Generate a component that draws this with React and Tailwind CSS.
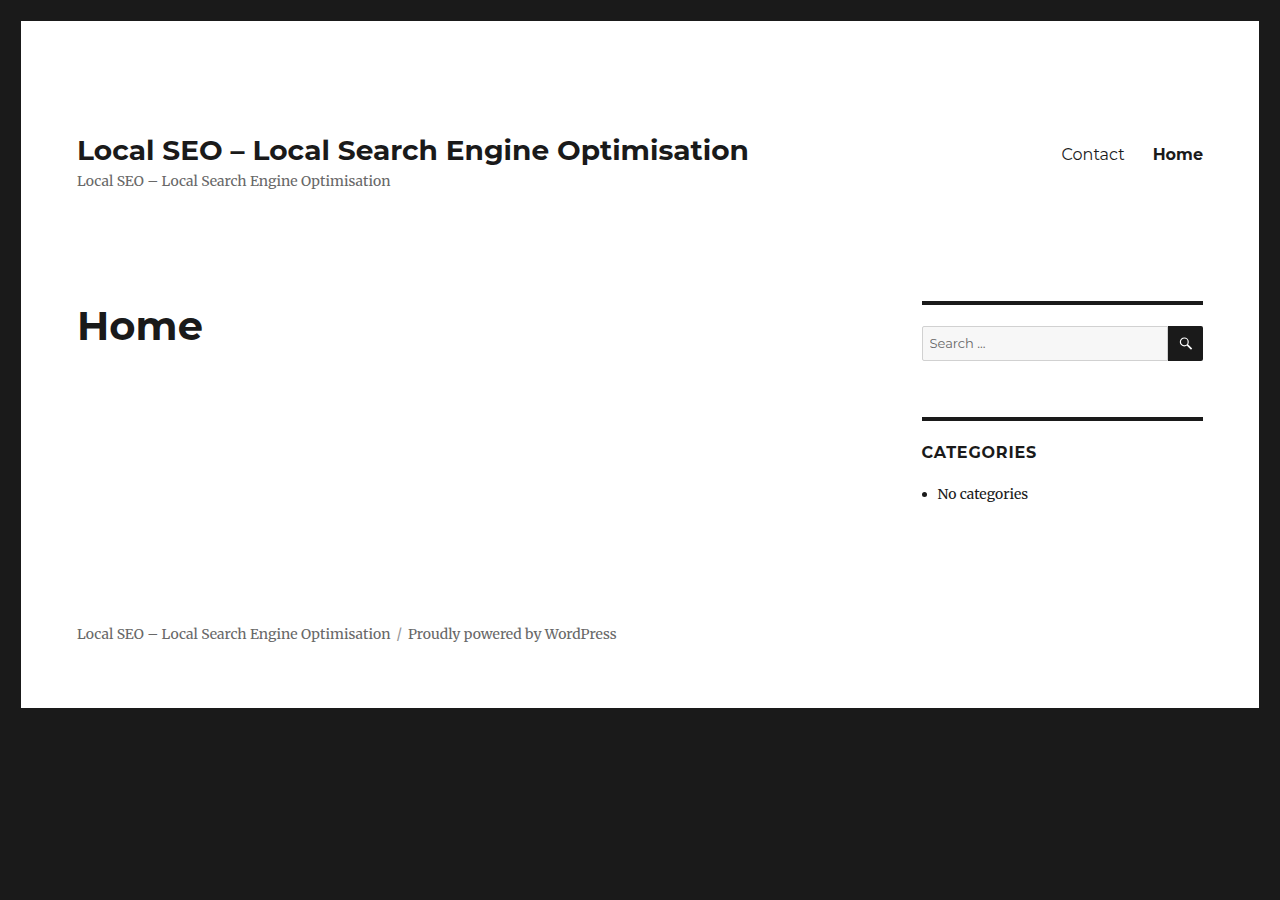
const siteName = 'Local SEO – Local Search Engine Optimisation';

function Header() {
  return (
    <header className="flex flex-wrap items-center justify-between pt-[110px] pb-28">
      <div>
        <p className="font-['Montserrat','Inter',sans-serif] text-[28px] leading-[38px] font-bold">
          <a href="#home">{siteName}</a>
        </p>
        <p className="mt-1 text-sm leading-4 text-[#686868]">{siteName}</p>
      </div>
      <nav aria-label="Primary menu" className="mb-2.5">
        <ul className="flex gap-7 font-['Montserrat','Inter',sans-serif] text-base leading-6">
          <li><a href="#contact">Contact</a></li>
          <li><a href="#home" aria-current="page" className="font-bold">Home</a></li>
        </ul>
      </nav>
    </header>
  );
}

function SearchForm() {
  return (
    <form role="search" className="flex" onSubmit={(event) => event.preventDefault()}>
      <input
        type="search"
        aria-label="Search for:"
        placeholder="Search ..."
        className="h-[35px] min-w-0 flex-1 rounded-l-xs border border-[#d1d1d1] bg-[#f7f7f7] px-[7px] pb-0.5 font-['Montserrat','Inter',sans-serif] text-[13px] placeholder:text-[#686868]"
      />
      <button type="submit" aria-label="Search" className="flex size-[35px] items-center justify-center rounded-r-xs bg-[#1a1a1a] text-white">
        <svg viewBox="0 0 14 14" className="size-[14px]" fill="none" stroke="currentColor" aria-hidden="true">
          <circle cx="5.3" cy="4.9" r="3.9" strokeWidth="1.2" />
          <path d="M8.1 7.7 L12.6 12.2" strokeWidth="1.7" />
        </svg>
      </button>
    </form>
  );
}

export default function App() {
  return (
    <div className="min-h-screen bg-[#1a1a1a] p-[21px] font-['Merriweather','DejaVu_Serif_Condensed','DejaVu_Serif',serif] text-[#1a1a1a]">
      <div className="bg-white px-14">
        <Header />
        <div className="flex items-start justify-between">
          <main>
            <h1 className="font-['Montserrat','Inter',sans-serif] text-[40px] leading-[50px] font-bold">Home</h1>
          </main>
          <aside className="w-1/4">
            <section className="mb-14 border-t-4 border-[#1a1a1a] pt-[21px]">
              <SearchForm />
            </section>
            <section className="mb-28 border-t-4 border-[#1a1a1a] pt-[21px]">
              <h2 className="mb-[22px] font-['Montserrat','Inter',sans-serif] text-base leading-[22px] font-bold tracking-wider uppercase">Categories</h2>
              <ul className="list-disc pl-4 text-sm leading-4">
                <li>No categories</li>
              </ul>
            </section>
          </aside>
        </div>
        <footer className="flex flex-wrap gap-x-1.5 pt-3 pb-[66px] text-sm leading-4 text-[#686868]">
          <a href="#home">{siteName}</a>
          <span aria-hidden="true" className="opacity-70">/</span>
          <a href="https://wordpress.org/">Proudly powered by WordPress</a>
        </footer>
      </div>
    </div>
  );
}
